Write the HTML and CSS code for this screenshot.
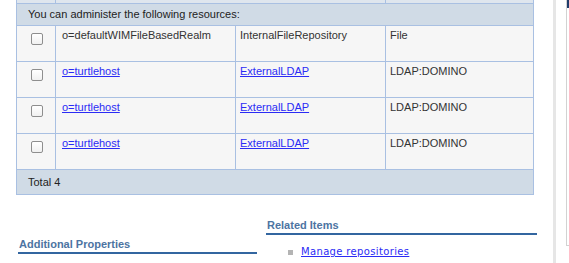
FILE: index.html
```html
<!DOCTYPE html>
<html>
<head>
<meta charset="utf-8">
<link rel="stylesheet" href="styles.css">
</head>
<body>
<div class="page">
  <main class="main">
    <table class="grid">
      <colgroup>
        <col class="c-check">
        <col class="c-name">
        <col class="c-repo">
        <col class="c-type">
      </colgroup>
      <tr class="head-strip">
        <td class="first"></td><td colspan="2"></td><td></td>
      </tr>
      <tr class="caption">
        <td class="first" colspan="4">You can administer the following resources:</td>
      </tr>
      <tr class="row">
        <td class="first check"><span class="box"></span></td>
        <td>o=defaultWIMFileBasedRealm</td>
        <td>InternalFileRepository</td>
        <td>File</td>
      </tr>
      <tr class="row">
        <td class="first check"><span class="box"></span></td>
        <td><a href="#">o=turtlehost</a></td>
        <td><a href="#">ExternalLDAP</a></td>
        <td>LDAP:DOMINO</td>
      </tr>
      <tr class="row">
        <td class="first check"><span class="box"></span></td>
        <td><a href="#">o=turtlehost</a></td>
        <td><a href="#">ExternalLDAP</a></td>
        <td>LDAP:DOMINO</td>
      </tr>
      <tr class="row">
        <td class="first check"><span class="box"></span></td>
        <td><a href="#">o=turtlehost</a></td>
        <td><a href="#">ExternalLDAP</a></td>
        <td>LDAP:DOMINO</td>
      </tr>
      <tr class="caption total">
        <td class="first" colspan="4">Total 4</td>
      </tr>
    </table>

    <div class="sections">
      <section class="addl">
        <h3 class="sec-title">Additional Properties</h3>
      </section>
      <section class="related">
        <h3 class="sec-title">Related Items</h3>
        <ul class="links">
          <li><a href="#">Manage repositories</a></li>
        </ul>
      </section>
    </div>
  </main>
  <div class="gutter"></div>
  <aside class="side"><div class="side-bar"></div></aside>
</div>
</body>
</html>
```

FILE: styles.css
```css
html, body {
  margin: 0;
  padding: 0;
  background: #ffffff;
  overflow: hidden;
}

body {
  font-family: "Liberation Sans", Arial, sans-serif;
  font-size: 11px;
  color: #333333;
}

.page {
  display: flex;
  align-items: flex-start;
  height: 263px;
}

.main {
  width: 553px;
  flex: none;
}

.grid {
  margin-left: 16px;
  width: 518px;
  table-layout: fixed;
  border-collapse: separate;
  border-spacing: 0;
}

.c-check { width: 40px; }
.c-name { width: 180px; }
.c-repo { width: 150px; }
.c-type { width: 148px; }

.grid td {
  border-right: 1px solid #a9c0e2;
  border-bottom: 1px solid #a9c0e2;
  padding: 3px 4px 0 4px;
  vertical-align: top;
  line-height: 13px;
  white-space: nowrap;
}

.grid td.first {
  border-left: 1px solid #a9c0e2;
}

.head-strip td {
  height: 3px;
  padding: 0;
  background: #dfe6ee;
}

.caption td {
  height: 21px;
  padding: 0 0 0 11px;
  vertical-align: middle;
  background: #d0dbe6;
  color: #222222;
}

.total td {
  height: 24px;
}

.row td {
  height: 32px;
  background: #f6f6f6;
}

.row td:nth-child(2) {
  padding-left: 6px;
}

.grid td.check {
  padding: 0;
}

.box {
  display: block;
  box-sizing: border-box;
  width: 12px;
  height: 12px;
  margin: 7px 0 0 14px;
  border: 1px solid #8e8e8e;
  border-radius: 2px;
  background: linear-gradient(#ffffff, #f0f0f0);
}

a {
  color: #2b2bf5;
  text-decoration: underline;
}

.sections {
  display: flex;
  align-items: flex-start;
  padding-left: 18px;
  margin-top: 24px;
}

.addl {
  width: 239px;
  margin-top: 19px;
}

.related {
  width: 271px;
  margin-left: 9px;
}

.sec-title {
  margin: 0;
  font-size: 11px;
  font-weight: bold;
  line-height: 13px;
  padding: 0 0 1px 1px;
  color: #4d74a2;
  border-bottom: 2px solid #3366a0;
}

.links {
  list-style: none;
  margin: 11px 0 0 0;
  padding: 0 0 0 22px;
}

.links li {
  display: flex;
  align-items: center;
  gap: 8px;
  font-family: "DejaVu Sans", Verdana, sans-serif;
  font-size: 10px;
  line-height: 12px;
  letter-spacing: 0.35px;
}

.links li::before {
  content: "";
  width: 5px;
  height: 5px;
  background: #b4b4b4;
  flex: none;
}

.links a {
  color: #2b2bf5;
}

.gutter {
  width: 3px;
  height: 263px;
  background: #e6e6e6;
  flex: none;
}

.side {
  margin-left: 10px;
  width: 3px;
  height: 245px;
  border-left: 1px solid #d2d2d2;
  border-bottom: 1px solid #d2d2d2;
  flex: none;
}

.side-bar {
  height: 8px;
  background: #1f3d6b;
}
```
